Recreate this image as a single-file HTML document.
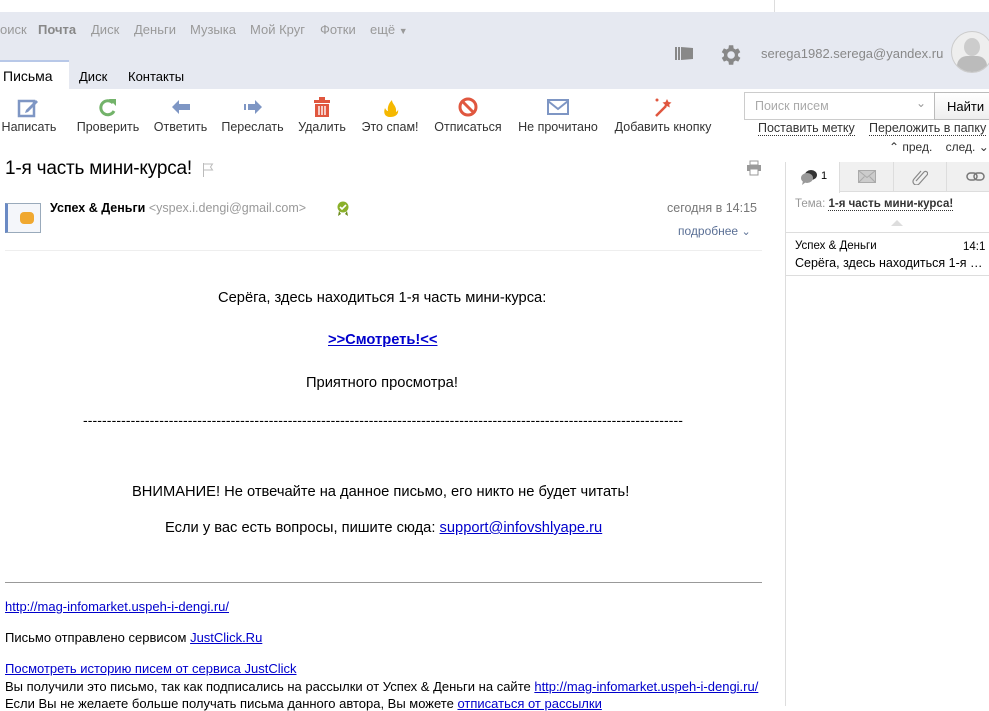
<!DOCTYPE html>
<html><head><meta charset="utf-8"><style>
*{margin:0;padding:0;box-sizing:border-box}
body{width:989px;height:706px;overflow:hidden;background:#fff;font-family:"Liberation Sans",Arial,sans-serif;font-size:13px;color:#000;position:relative}
.a{position:absolute;white-space:nowrap}
.g{color:#999}
a{color:#00c;text-decoration:underline}
.tb{position:absolute;top:96px;text-align:center;font-size:12.5px;color:#333}
.tb svg{display:block;margin:0 auto 2px}
.n{position:absolute;top:22px;font-size:13px;color:#999}
.m{font-size:14.7px}
.f{font-size:13px}
</style></head><body>
<div class="a" style="left:774px;top:0;width:1px;height:12px;background:#ddd"></div>
<div class="a" style="left:0;top:12px;width:989px;height:77px;background:#e6e9f1"></div>
<div class="n" style="left:0">оиск</div>
<div class="n" style="left:38px;color:#888;font-weight:bold">Почта</div>
<div class="n" style="left:91px">Диск</div>
<div class="n" style="left:134px">Деньги</div>
<div class="n" style="left:190px">Музыка</div>
<div class="n" style="left:250px">Мой Круг</div>
<div class="n" style="left:320px">Фотки</div>
<div class="n" style="left:370px">ещё <span style="font-size:9px">▼</span></div>
<div class="a" style="left:0;top:60px;width:69px;height:29px;background:#fff;border-top:2px solid #b8c8e8"></div>
<div class="a" style="left:3px;top:68px;font-size:14px">Письма</div>
<div class="a" style="left:79px;top:69px">Диск</div>
<div class="a" style="left:128px;top:69px">Контакты</div>
<svg class="a" style="left:674px;top:44px" width="20" height="20"><rect x="1" y="3" width="2" height="13" fill="#888"/><rect x="4" y="3" width="2" height="13" fill="#888"/><path d="M7 3l12 1v11l-12 1z" fill="#888"/></svg>
<svg class="a" style="left:717px;top:42px" width="26" height="26" viewBox="0 0 24 24"><path fill="#888" d="M19.4 13a7.5 7.5 0 000-2l2.1-1.6-2-3.5-2.5 1a7 7 0 00-1.7-1L15 3h-4l-.4 2.9a7 7 0 00-1.700 1l-2.5-1-2 3.5L6.5 11a7.5 7.5 0 000 2l-2.1 1.6 2 3.5 2.5-1a7 7 0 001.7 1L11 21h4l.4-2.9a7 7 0 001.7-1l2.5 1 2-3.5zM13 15.5a3.5 3.5 0 110-7 3.5 3.5 0 010 7z"/></svg>
<div class="a" style="left:761px;top:46px;color:#888;font-size:13px">serega1982.serega@yandex.ru</div>
<div class="a" style="left:951px;top:31px;width:42px;height:42px;border-radius:50%;background:#eee;border:1px solid #ccc;overflow:hidden"><div style="position:absolute;left:12px;top:6px;width:16px;height:18px;border-radius:50%;background:#ccc"></div><div style="position:absolute;left:5px;top:24px;width:30px;height:20px;border-radius:10px 10px 0 0;background:#bbb"></div></div>

<div class="tb" style="left:0;width:58px"><svg width="24" height="22"><rect x="2" y="5" width="15" height="15" fill="none" stroke="#7e96c4" stroke-width="2.5"/><path d="M9 14l10-10 2 2-10 10-3 1z" fill="#7e96c4"/></svg>Написать</div>
<div class="tb" style="left:75px;width:66px"><svg width="22" height="22"><path d="M16 7a7 7 0 10 1 8" fill="none" stroke="#73b36a" stroke-width="3"/><path d="M12 3l7 0 0 7z" fill="#73b36a"/></svg>Проверить</div>
<div class="tb" style="left:153px;width:55px"><svg width="22" height="22"><path d="M2 11l7-7v4h11v6H9v4z" fill="#7e96c4"/></svg>Ответить</div>
<div class="tb" style="left:220px;width:65px"><svg width="22" height="22"><path d="M20 11l-7-7v4H6v6h7v4z" fill="#7e96c4"/><rect x="2" y="8" width="2" height="6" fill="#7e96c4"/></svg>Переслать</div>
<div class="tb" style="left:297px;width:50px"><svg width="22" height="22"><rect x="3" y="4" width="16" height="3" fill="#e0573f"/><rect x="8" y="1" width="6" height="3" fill="#e0573f"/><path d="M4 8h14v13H4z" fill="#e0573f"/><path d="M8 10v9M11 10v9M14 10v9" stroke="#fff" stroke-width="1.4"/></svg>Удалить</div>
<div class="tb" style="left:360px;width:60px"><svg width="22" height="22"><path d="M11 21c-5 0-7-4-5-9 1 2 2 3 3 3-1-5 2-9 4-11 0 4 5 6 4 12 2-1 2-2 2-3 1 5-2 8-8 8z" fill="#f5b800"/></svg>Это спам!</div>
<div class="tb" style="left:432px;width:72px"><svg width="22" height="22"><circle cx="11" cy="11" r="8" fill="none" stroke="#e0573f" stroke-width="3"/><path d="M5.5 5.5l11 11" stroke="#e0573f" stroke-width="3"/></svg>Отписаться</div>
<div class="tb" style="left:516px;width:84px"><svg width="24" height="22"><rect x="2" y="4" width="20" height="14" fill="none" stroke="#7e96c4" stroke-width="2"/><path d="M2 5l10 8 10-8" fill="none" stroke="#7e96c4" stroke-width="2"/></svg>Не прочитано</div>
<div class="tb" style="left:612px;width:102px"><svg width="24" height="22"><path d="M5 20l10-10" stroke="#e0573f" stroke-width="2.5"/><path d="M16 3l1.5 3 3 .5-2.3 2 .6 3-2.8-1.5-2.8 1.5.6-3-2.3-2 3-.5z" fill="#e0573f"/><circle cx="6" cy="4" r="1.5" fill="#e0573f"/></svg>Добавить кнопку</div>

<div class="a" style="left:744px;top:92px;width:191px;height:28px;border:1px solid #ccc"><span class="g" style="position:absolute;left:10px;top:6px;color:#aaa;font-size:12.5px">Поиск писем</span><span style="position:absolute;right:8px;top:3px;color:#999;font-size:12px">⌄</span></div>
<div class="a" style="left:934px;top:92px;width:60px;height:28px;border:1px solid #bbb;background:linear-gradient(#fff,#eee);padding:6px 0 0 12px;font-size:13px">Найти</div>
<div class="a" style="left:758px;top:121px;font-size:12.5px;color:#333;border-bottom:1px dotted #333">Поставить метку</div>
<div class="a" style="left:869px;top:121px;font-size:12.5px;color:#333;border-bottom:1px dotted #333">Переложить в папку</div>
<div class="a" style="left:889px;top:140px;font-size:12px;color:#333">⌃ пред.&nbsp;&nbsp;&nbsp; след. ⌄</div>

<div class="a" style="left:5px;top:158px;font-size:19px;letter-spacing:-0.2px">1-я часть мини-курса!</div>
<svg class="a" style="left:202px;top:163px" width="12" height="14"><path d="M1.5 0v14M1.5 1h9l-2 3 2 3h-9" fill="none" stroke="#bbb"/></svg>
<svg class="a" style="left:746px;top:160px" width="16" height="16"><rect x="4" y="1" width="8" height="4" fill="none" stroke="#999"/><rect x="1" y="5" width="14" height="6" fill="#999"/><rect x="4" y="9" width="8" height="6" fill="#fff" stroke="#999"/></svg>
<div class="a" style="left:5px;top:203px;width:36px;height:30px;border:1px solid #9ab;border-left:3px solid #6a8ac4;background:#f4f6fa"><div style="position:absolute;left:12px;top:8px;width:14px;height:12px;background:#f0a830;border-radius:4px"></div></div>
<div class="a" style="left:50px;top:201px;font-size:12.5px"><b>Успех &amp; Деньги</b> <span style="color:#999">&lt;yspex.i.dengi@gmail.com&gt;</span></div>
<svg class="a" style="left:336px;top:201px" width="14" height="16"><circle cx="7" cy="6" r="5.5" fill="#8ab02a"/><path d="M4 6l2 2 4-4" stroke="#fff" stroke-width="1.6" fill="none"/><path d="M3 10l-1 5 3-2M11 10l1 5-3-2" fill="#6a8a1a"/></svg>
<div class="a" style="left:667px;top:201px;font-size:12.5px;color:#777">сегодня в 14:15</div>
<div class="a" style="left:678px;top:224px;font-size:12px;color:#5a6f95">подробнее <span style="font-size:11px">⌄</span></div>
<div class="a" style="left:5px;top:250px;width:757px;height:1px;background:#eee"></div>

<div class="a m" style="left:218px;top:290px">Серёга, здесь находиться 1-я часть мини-курса:</div>
<div class="a m" style="left:328px;top:332px"><a href="#"><b>&gt;&gt;Смотреть!&lt;&lt;</b></a></div>
<div class="a m" style="left:306px;top:375px">Приятного просмотра!</div>
<div class="a" style="left:83px;top:412px;font-size:14px;letter-spacing:0.1px">------------------------------------------------------------------------------------------------------------------------------</div>
<div class="a m" style="left:132px;top:484px">ВНИМАНИЕ! Не отвечайте на данное письмо, его никто не будет читать!</div>
<div class="a m" style="left:165px;top:520px">Если у вас есть вопросы, пишите сюда: <a href="#">support@infovshlyape.ru</a></div>
<div class="a" style="left:5px;top:582px;width:757px;height:1px;background:#999"></div>
<div class="a f" style="left:5px;top:599px"><a href="#">http://mag-infomarket.uspeh-i-dengi.ru/</a></div>
<div class="a f" style="left:5px;top:630px">Письмо отправлено сервисом <a href="#">JustClick.Ru</a></div>
<div class="a f" style="left:5px;top:661px"><a href="#">Посмотреть историю писем от сервиса JustClick</a></div>
<div class="a f" style="left:5px;top:679px">Вы получили это письмо, так как подписались на рассылки от Успех &amp; Деньги на сайте <a href="#">http://mag-infomarket.uspeh-i-dengi.ru/</a></div>
<div class="a f" style="left:5px;top:696px">Если Вы не желаете больше получать письма данного автора, Вы можете <a href="#">отписаться от рассылки</a></div>

<div class="a" style="left:785px;top:162px;width:1px;height:544px;background:#ddd"></div>
<div class="a" style="left:786px;top:162px;width:203px;height:30px;background:#f0f0f0;border-bottom:1px solid #ddd"></div>
<div class="a" style="left:786px;top:162px;width:54px;height:31px;background:#fff;border-right:1px solid #ddd"></div>
<div class="a" style="left:893px;top:162px;width:1px;height:30px;background:#ddd"></div>
<div class="a" style="left:946px;top:162px;width:1px;height:30px;background:#ddd"></div>
<svg class="a" style="left:800px;top:169px" width="18" height="16"><ellipse cx="11" cy="6" rx="6" ry="5" fill="#333"/><ellipse cx="7" cy="9" rx="6" ry="5" fill="#999"/><path d="M3 12l-1 4 4-3" fill="#999"/></svg>
<div class="a" style="left:821px;top:170px;font-size:11px">1</div>
<svg class="a" style="left:858px;top:170px" width="18" height="13"><rect x=".5" y=".5" width="17" height="12" fill="#ccc" stroke="#aaa"/><path d="M.5 .5l8.5 7 8.5-7M.5 12.5l6-6M17.5 12.5l-6-6" stroke="#aaa" fill="none"/></svg>
<svg class="a" style="left:912px;top:167px" width="16" height="18"><path d="M4 14l8-9a2 2 0 013 3l-8 9a3.5 3.5 0 01-5-5l7-8" fill="none" stroke="#888" stroke-width="1.2"/></svg>
<svg class="a" style="left:966px;top:171px" width="20" height="12"><rect x="1" y="2" width="10" height="7" rx="3.5" fill="none" stroke="#777" stroke-width="1.5"/><rect x="8" y="2" width="10" height="7" rx="3.5" fill="none" stroke="#777" stroke-width="1.5"/></svg>
<div class="a" style="left:795px;top:198px;font-size:11.5px"><span style="color:#999">Тема:</span> <b style="color:#333;border-bottom:1px dotted #333">1-я часть мини-курса!</b></div>
<div class="a" style="left:891px;top:220px;width:0;height:0;border:6px solid transparent;border-bottom-color:#ddd;border-top:0"></div>
<div class="a" style="left:786px;top:232px;width:203px;height:1px;background:#ddd"></div>
<div class="a" style="left:786px;top:275px;width:203px;height:1px;background:#ddd"></div>
<div class="a" style="left:795px;top:240px;font-size:11.5px">Успех &amp; Деньги</div>
<div class="a" style="left:963px;top:241px;font-size:11.5px">14:1</div>
<div class="a" style="left:795px;top:256px;font-size:12.5px">Серёга, здесь находиться 1-я …</div>
</body></html>
